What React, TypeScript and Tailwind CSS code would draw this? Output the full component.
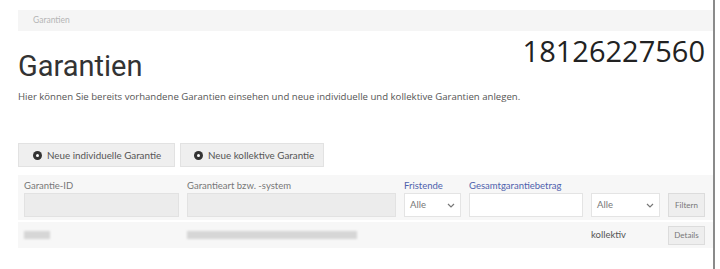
import React from 'react';

const Chevron = () => (
  <svg width="8" height="5" viewBox="0 0 8 5" fill="none" stroke="#777" strokeWidth="1.2">
    <path d="M1 1l3 3 3-3" />
  </svg>
);

const PlusDot = () => (
  <span className="w-[9px] h-[9px] rounded-full bg-[#333] flex items-center justify-center">
    <span className="w-[3px] h-[3px] rounded-full bg-white" />
  </span>
);

const Blur = ({ w }: { w: number }) => (
  <div className="h-[8px] bg-[#d6d6d6] blur-[1px]" style={{ width: w }} />
);

const App = () => {
  return (
    <div className="w-[720px] h-[269px] bg-white overflow-hidden flex font-['Lato',sans-serif]">
      <div className="w-[713px] pl-[18px] pt-[10px]">
        {/* Breadcrumb */}
        <div className="h-[21px] bg-[#f5f5f5] pl-[15px] flex items-center text-[8.5px] text-[#b5b5b5]">
          Garantien
        </div>

        {/* Header */}
        <div className="flex justify-between items-start h-[60px]">
          <h1 className="mt-[18px] text-[29px] leading-[34px] text-[#333] font-['Roboto',sans-serif]">
            Garantien
          </h1>
          <div className="mt-[3px] mr-[8px] text-[29px] leading-[34px] text-[#222] font-['Open_Sans',sans-serif]">
            18126227560
          </div>
        </div>

        <p className="text-[9.6px] leading-[12px] text-[#555] font-['Open_Sans',sans-serif] whitespace-nowrap">
          Hier können Sie bereits vorhandene Garantien einsehen und neue individuelle und kollektive Garantien anlegen.
        </p>

        {/* Buttons */}
        <div className="flex gap-[5px] mt-[40px]">
          <button className="h-[24px] w-[157px] bg-[#efefef] border border-[#e2e2e2] flex items-center gap-[5px] pl-[14px] text-[9.8px] text-[#555]">
            <PlusDot />
            Neue individuelle Garantie
          </button>
          <button className="h-[24px] w-[144px] bg-[#efefef] border border-[#e2e2e2] flex items-center gap-[5px] pl-[13px] text-[9.8px] text-[#555]">
            <PlusDot />
            Neue kollektive Garantie
          </button>
        </div>

        {/* Filter panel */}
        <div className="mt-[8px] bg-[#f7f7f7] pl-[6px] pt-[3px] pb-[3px]">
          <div className="grid grid-cols-[155px_209px_57px_114px_69px_37px] gap-x-[8px] text-[9.5px]">
            <div className="h-[15px] leading-[15px] text-[#777]">Garantie-ID</div>
            <div className="h-[15px] leading-[15px] text-[#777]">Garantieart bzw. -system</div>
            <div className="h-[15px] leading-[15px] text-[#4f62ad]">Fristende</div>
            <div className="h-[15px] leading-[15px] text-[#4f62ad] whitespace-nowrap">Gesamtgarantiebetrag</div>
            <div />
            <div />

            <div className="h-[24px] bg-[#ececec] border border-[#e2e2e2]" />
            <div className="h-[24px] bg-[#ececec] border border-[#e2e2e2]" />
            <div className="h-[24px] bg-white border border-[#e4e4e4] flex items-center justify-between px-[5px] text-[#777]">
              Alle
              <Chevron />
            </div>
            <div className="h-[24px] bg-white border border-[#e4e4e4]" />
            <div className="h-[24px] bg-white border border-[#e4e4e4] flex items-center justify-between px-[5px] text-[#777]">
              Alle
              <Chevron />
            </div>
            <button className="h-[24px] bg-[#eeeeee] border border-[#dcdcdc] text-[8px] text-[#777]">Filtern</button>
          </div>
        </div>

        {/* Result row */}
        <div className="mt-[2px] bg-[#f7f7f7] pl-[6px] h-[26px] grid grid-cols-[155px_209px_57px_114px_69px_37px] gap-x-[8px] items-center text-[9.5px]">
          <Blur w={26} />
          <Blur w={170} />
          <div />
          <div />
          <div className="text-[#555]">kollektiv</div>
          <button className="h-[19px] bg-[#eeeeee] border border-[#dcdcdc] text-[8px] text-[#777]">Details</button>
        </div>
      </div>
      <div className="w-[2px] h-full bg-[#8a8a8a]" />
    </div>
  );
};

export default App;
